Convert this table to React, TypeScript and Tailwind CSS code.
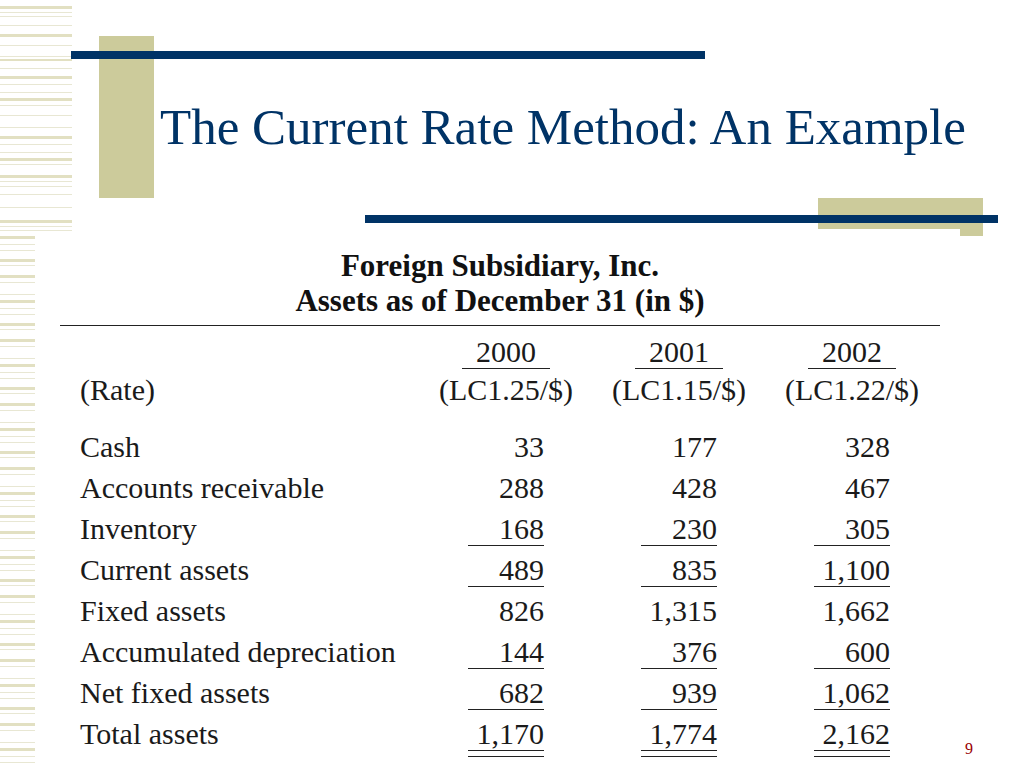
import React from "react";

const TOP_STRIPES: [number, number][] = [
  [6, 3], [12, 1], [16, 1], [25, 1], [34, 3], [45, 1], [56, 1], [59, 2], [68, 1],
  [76, 3], [84, 1], [92, 1], [98, 3], [105, 1], [115, 1], [127, 1], [136, 3],
  [144, 1], [152, 1], [158, 3], [164, 1], [175, 3], [181, 1], [186, 1], [194, 1],
  [207, 1], [220, 3], [226, 1], [230, 1],
];

const BLOCK: [number, number][] = [
  [0, 3], [8, 1], [14, 1], [23, 3], [29, 1], [39, 3], [46, 1], [58, 1],
];

function Stripes() {
  const bottom: [number, number][] = [];
  for (let y = 236; y < 768; y += 64) {
    BLOCK.forEach(([o, h]) => {
      if (y + o < 768) bottom.push([y + o, h]);
    });
  }
  return (
    <svg width="72" height="768" className="absolute left-0 top-0">
      {TOP_STRIPES.map(([y, h], i) => (
        <rect key={"t" + i} x="0" y={y} width="72" height={h} fill={h > 1 ? "#e2e0c2" : "#e8e7d3"} />
      ))}
      {bottom.map(([y, h], i) => (
        <rect key={"b" + i} x="0" y={y} width="35" height={h} fill={h > 1 ? "#e2e0c2" : "#e8e7d3"} />
      ))}
    </svg>
  );
}

type Row = { label: string; values: string[]; line?: "single" | "double" };

const ROWS: Row[] = [
  { label: "Cash", values: ["33", "177", "328"] },
  { label: "Accounts receivable", values: ["288", "428", "467"] },
  { label: "Inventory", values: ["168", "230", "305"], line: "single" },
  { label: "Current assets", values: ["489", "835", "1,100"], line: "single" },
  { label: "Fixed assets", values: ["826", "1,315", "1,662"] },
  { label: "Accumulated depreciation", values: ["144", "376", "600"], line: "single" },
  { label: "Net fixed assets", values: ["682", "939", "1,062"], line: "single" },
  { label: "Total assets", values: ["1,170", "1,774", "2,162"], line: "double" },
];

function NumCell({ value, line, first }: { value: string; line?: Row["line"]; first?: boolean }) {
  return (
    <div className={first ? "w-[76px]" : "w-[76px] ml-[97px]"}>
      <div
        className={
          "pt-[4px] leading-[33px] text-right " +
          (line ? "border-b border-[#222]" : "border-b border-transparent")
        }
      >
        {value}
      </div>
      {line === "double" && <div className="mt-[5px] h-px bg-[#222]" />}
    </div>
  );
}

export default function App() {
  const years = ["2000", "2001", "2002"];
  const rates = ["(LC1.25/$)", "(LC1.15/$)", "(LC1.22/$)"];

  return (
    <div className="relative w-[1024px] h-[768px] overflow-hidden bg-white font-['Liberation_Serif',serif] text-[#1a1a1a]">
      <Stripes />
      <div className="absolute left-[99px] top-[36px] w-[55px] h-[162px] bg-[#cccb9b]" />
      <div className="absolute left-[818px] top-[198px] w-[165px] h-[31px] bg-[#cccb9b]" />
      <div className="absolute left-[960px] top-[198px] w-[23px] h-[38px] bg-[#cccb9b]" />

      <div className="relative flex flex-col">
        <div className="mt-[51px] ml-[71px] w-[634px] h-[8px] bg-[#003366]" />
        <h1 className="mt-[43px] ml-[160px] text-[51px] leading-[51px] text-[#003366] whitespace-nowrap">
          The Current Rate Method: An Example
        </h1>
        <div className="mt-[62px] ml-[365px] w-[633px] h-[8px] bg-[#003366]" />

        <div className="mt-[25px] ml-[60px] w-[880px] text-center text-[31px] leading-[35px] font-bold text-[#111]">
          <div>Foreign Subsidiary, Inc.</div>
          <div>Assets as of December 31 (in $)</div>
        </div>
        <div className="mt-[7px] ml-[60px] w-[880px] h-px bg-[#222]" />

        <div className="ml-[80px] text-[30px]">
          <div className="mt-[9px] flex">
            <div className="w-[388px]" />
            {years.map((y, i) => (
              <div key={y} className={"w-[76px] flex justify-center " + (i ? "ml-[97px]" : "")}>
                <div className="shrink-0 w-[88px] text-center leading-[33px] border-b border-[#222]">{y}</div>
              </div>
            ))}
          </div>
          <div className="flex h-[41px] leading-[41px]">
            <div className="w-[388px]">(Rate)</div>
            {rates.map((r, i) => (
              <div key={r} className={"w-[76px] flex justify-center " + (i ? "ml-[97px]" : "")}>
                <div className="shrink-0 whitespace-nowrap">{r}</div>
              </div>
            ))}
          </div>

          <div className="mt-[16px] flex flex-col">
            {ROWS.map((row, ri) => (
              <div key={row.label} className={"flex " + (ri < ROWS.length - 1 ? "h-[41px]" : "")}>
                <div className="w-[388px] pt-[4px] leading-[33px] whitespace-nowrap">{row.label}</div>
                {row.values.map((v, i) => (
                  <NumCell key={i} value={v} line={row.line} first={i === 0} />
                ))}
                {ri === ROWS.length - 1 && (
                  <div className="ml-[75px] pt-[28px] text-[16px] leading-[16px] text-[#990000]">9</div>
                )}
              </div>
            ))}
          </div>
        </div>
      </div>
    </div>
  );
}
